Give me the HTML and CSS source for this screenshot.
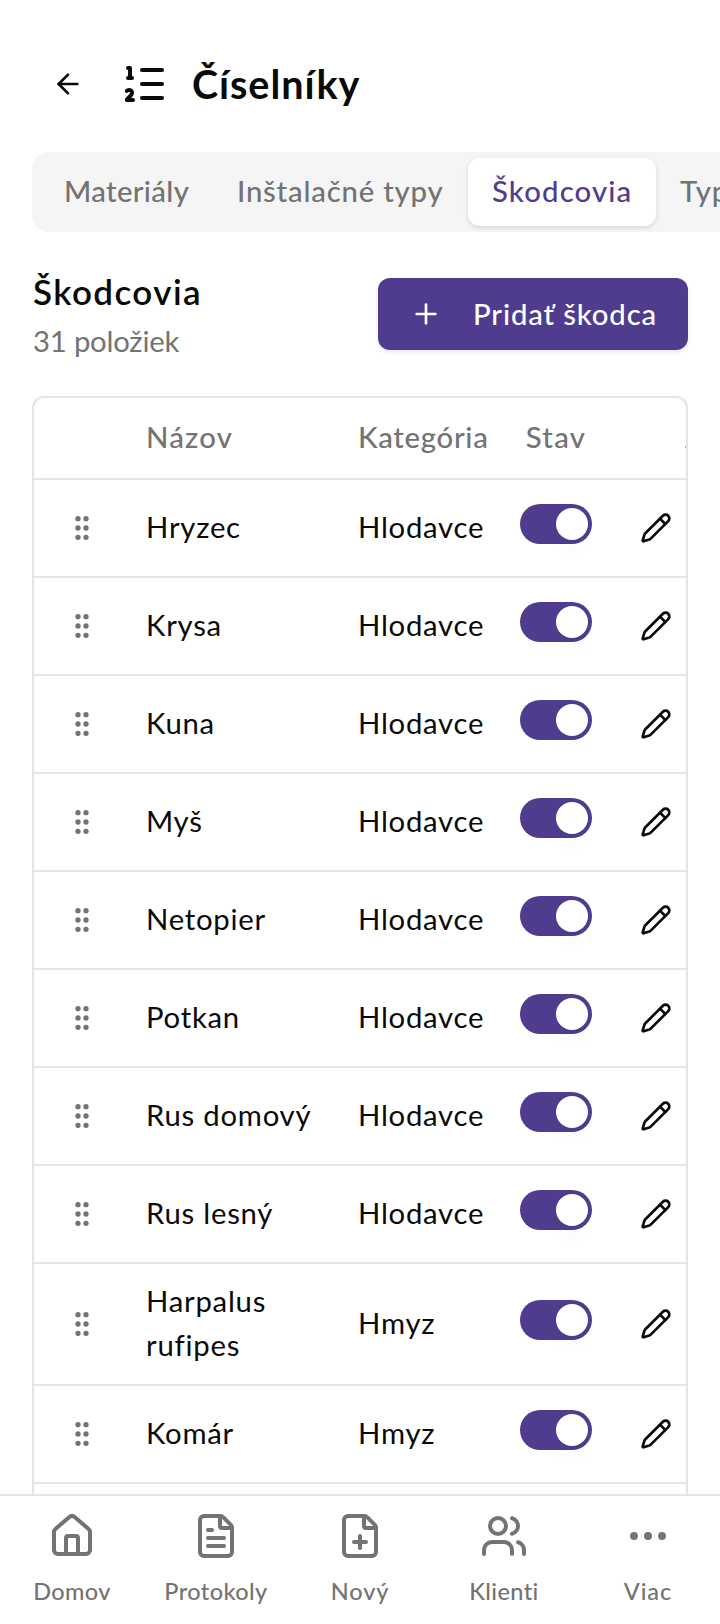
FILE: index.html
```html
<!DOCTYPE html>
<html lang="sk">
<head>
  <meta charset="UTF-8">
  <meta name="viewport" content="width=device-width, initial-scale=1.0">
  <title>Číselníky</title>
  <link rel="stylesheet" href="styles.css">
</head>
<body>
  <svg class="sprite" width="0" height="0">
    <symbol id="grip" viewBox="0 0 24 24">
      <circle cx="9" cy="12" r="1"/><circle cx="9" cy="5" r="1"/><circle cx="9" cy="19" r="1"/>
      <circle cx="15" cy="12" r="1"/><circle cx="15" cy="5" r="1"/><circle cx="15" cy="19" r="1"/>
    </symbol>
    <symbol id="pencil" viewBox="0 0 24 24">
      <path d="M21.174 6.812a1 1 0 0 0-3.986-3.987L3.842 16.174a2 2 0 0 0-.5.83l-1.321 4.352a.5.5 0 0 0 .623.622l4.353-1.32a2 2 0 0 0 .83-.497z"/>
      <path d="m15 5 4 4"/>
    </symbol>
    <symbol id="file" viewBox="0 0 24 24">
      <path d="M6 22a2 2 0 0 1-2-2V4a2 2 0 0 1 2-2h8a2.4 2.4 0 0 1 1.704.706l3.588 3.588A2.4 2.4 0 0 1 20 8v12a2 2 0 0 1-2 2z"/>
      <path d="M14 2v5a1 1 0 0 0 1 1h5"/>
    </symbol>
  </svg>

  <div class="screen">
    <header class="page-header">
      <a href="#" class="back">
        <svg class="icon" viewBox="0 0 24 24"><path d="m12 19-7-7 7-7"/><path d="M19 12H5"/></svg>
      </a>
      <svg class="icon icon-lg" viewBox="0 0 24 24">
        <path d="M11 5h10"/><path d="M11 12h10"/><path d="M11 19h10"/>
        <path d="M4 4h1v5"/><path d="M4 9h2"/>
        <path d="M6.5 20H3.4c0-1 2.6-1.925 2.6-3.5a1.5 1.5 0 0 0-2.6-1.02"/>
      </svg>
      <h1>Číselníky</h1>
    </header>

    <nav class="tabs">
      <a href="#" class="tab tab-materials">Materiály</a>
      <a href="#" class="tab tab-install">Inštalačné typy</a>
      <a href="#" class="tab tab-pests active">Škodcovia</a>
      <a href="#" class="tab">Typy zásahov</a>
    </nav>

    <section class="section-head">
      <div>
        <h2>Škodcovia</h2>
        <p class="count">31 položiek</p>
      </div>
      <button class="add">
        <svg class="icon" viewBox="0 0 24 24"><path d="M5 12h14"/><path d="M12 5v14"/></svg>
        <span>Pridať škodca</span>
      </button>
    </section>

    <div class="table-wrap">
      <table>
        <colgroup>
          <col class="col-grip"><col class="col-name"><col class="col-cat"><col class="col-state"><col class="col-actions">
        </colgroup>
        <thead>
          <tr><th></th><th class="th-name">Názov</th><th class="th-cat">Kategória</th><th class="th-state">Stav</th><th class="th-actions">Akcie</th></tr>
        </thead>
        <tbody id="rows"></tbody>
      </table>
    </div>

    <nav class="bottom-nav">
      <a href="#">
        <svg class="icon icon-lg" viewBox="0 0 24 24">
          <path d="M15 21v-8a1 1 0 0 0-1-1h-4a1 1 0 0 0-1 1v8"/>
          <path d="M3 10a2 2 0 0 1 .709-1.528l7-5.999a2 2 0 0 1 2.582 0l7 5.999A2 2 0 0 1 21 10v9a2 2 0 0 1-2 2H5a2 2 0 0 1-2-2z"/>
        </svg>
        <span>Domov</span>
      </a>
      <a href="#">
        <svg class="icon icon-lg" viewBox="0 0 24 24"><use href="#file"/><path d="M10 9H8"/><path d="M16 13H8"/><path d="M16 17H8"/></svg>
        <span>Protokoly</span>
      </a>
      <a href="#">
        <svg class="icon icon-lg" viewBox="0 0 24 24"><use href="#file"/><path d="M9 15h6"/><path d="M12 18v-6"/></svg>
        <span class="wide">Nový</span>
      </a>
      <a href="#">
        <svg class="icon icon-lg" viewBox="0 0 24 24">
          <path d="M16 21v-2a4 4 0 0 0-4-4H6a4 4 0 0 0-4 4v2"/><path d="M16 3.128a4 4 0 0 1 0 7.744"/>
          <path d="M22 21v-2a4 4 0 0 0-3-3.87"/><circle cx="9" cy="7" r="4"/>
        </svg>
        <span>Klienti</span>
      </a>
      <a href="#">
        <svg class="icon icon-lg" viewBox="0 0 24 24"><circle cx="12" cy="12" r="1"/><circle cx="19" cy="12" r="1"/><circle cx="5" cy="12" r="1"/></svg>
        <span class="wide">Viac</span>
      </a>
    </nav>
  </div>

  <script src="script.js"></script>
</body>
</html>
```
FILE: styles.css
```css
* { box-sizing: border-box; }
body { margin: 0; font-family: Lato, sans-serif; font-size: 29.3px; line-height: 44px; color: #0a0a0a; background: #fff; }
a { color: inherit; text-decoration: none; }
h1, h2, p { margin: 0; }
.sprite { display: block; }

.screen { display: flex; flex-direction: column; height: 1624px; overflow: hidden; }
.icon { width: 32px; height: 32px; flex: none; display: block; fill: none; stroke: currentColor; stroke-width: 2; stroke-linecap: round; stroke-linejoin: round; }
.icon-lg { width: 48px; height: 48px; }

/* header */
.page-header { display: flex; align-items: center; height: 104px; margin-top: 32px; padding-left: 52px; }
.back { margin-right: 36px; }
.page-header h1 { margin-left: 24px; font-size: 39.5px; font-weight: 700; line-height: 56px; letter-spacing: 0.95px; }

/* tabs */
.tabs { display: flex; flex: none; height: 80px; margin: 16px 0 0 32px; padding: 6px; background: #f5f5f5; border-radius: 16px 0 0 16px; overflow: hidden; }
.tab { flex: none; height: 68px; padding: 11px 24px; color: #737373; font-weight: 500; letter-spacing: 0.8px; white-space: nowrap; border-radius: 12px; }
.tab-materials { width: 173px; padding-left: 26px; letter-spacing: 0.35px; }
.tab-install { width: 257px; padding-left: 26px; }
.tab-pests { width: 188px; letter-spacing: 1.15px; }
.tab.active { background: #fff; color: #503c8e; box-shadow: 0 2px 5px rgba(0,0,0,0.12); }

/* section title + button */
.section-head { display: flex; justify-content: space-between; padding: 0 32px; margin-top: 32px; height: 132px; }
.section-head h2 { margin: 1px 0 0 1px; font-size: 35px; line-height: 52px; font-weight: 600; letter-spacing: 1.4px; }
.count { margin-left: 1px; color: #737373; line-height: 48px; letter-spacing: -0.2px; }
.add { display: flex; align-items: center; width: 310px; height: 72px; margin-top: 14px; padding: 0 0 0 32px; border: 0; border-radius: 12px; background: #503c8e; color: #fff; font: inherit; font-weight: 500; letter-spacing: 0.85px; box-shadow: 0 2px 4px rgba(0,0,0,0.1); }
.add span { margin-left: 31px; white-space: nowrap; }

/* table */
.table-wrap { flex: 1; min-height: 0; margin: 0 32px; border: 2px solid #e5e5e5; border-bottom: 0; border-radius: 12px 12px 0 0; overflow: hidden; }
table { width: 774px; table-layout: fixed; border-collapse: separate; border-spacing: 0; letter-spacing: 0.75px; }
.col-grip { width: 96px; }
.col-name { width: 213px; }
.col-cat { width: 161px; }
.col-state { width: 104px; }
.col-actions { width: 200px; }
th, td { padding: 0 16px; text-align: left; border-bottom: 2px solid #e5e5e5; }
th { height: 82px; padding-bottom: 2px; color: #737373; font-weight: 500; }
td { height: 98px; }
.name, .category { padding-bottom: 2px; }
.category { padding-left: 15px; }
.tall td { height: 122px; }
.th-name { letter-spacing: 1.2px; }
.th-cat { padding-left: 15px; letter-spacing: 0.7px; }
.th-state { text-align: center; letter-spacing: 1.3px; }
.th-actions { padding-left: 77px; }
.grip { padding-left: 32px; color: #737373; }
.actions { padding-left: 32px; }
.switch { display: block; width: 72px; height: 40px; margin-top: -8px; padding: 4px; border-radius: 20px; background: #503c8e; }
.switch span { display: block; width: 32px; height: 32px; margin-left: 32px; border-radius: 50%; background: #fff; box-shadow: 0 16px 16px -6px rgba(0,0,0,0.03); }

/* bottom bar */
.bottom-nav { display: grid; grid-template-columns: repeat(5, 1fr); flex: none; height: 130px; padding-top: 16px; border-top: 2px solid #e5e5e5; background: #fff; color: #737373; }
.bottom-nav a { display: flex; flex-direction: column; align-items: center; font-size: 23.5px; font-weight: 500; line-height: 32px; }
.bottom-nav span { margin-top: 15px; letter-spacing: 0.4px; }
.bottom-nav .wide { letter-spacing: 0.9px; }
```
FILE: script.js
```javascript
const pests = [
  ['Hryzec', 'Hlodavce'],
  ['Krysa', 'Hlodavce'],
  ['Kuna', 'Hlodavce'],
  ['Myš', 'Hlodavce'],
  ['Netopier', 'Hlodavce'],
  ['Potkan', 'Hlodavce'],
  ['Rus domový', 'Hlodavce'],
  ['Rus lesný', 'Hlodavce'],
  ['Harpalus<br>rufipes', 'Hmyz', 'tall'],
  ['Komár', 'Hmyz'],
  ['', '']
];

document.getElementById('rows').innerHTML = pests.map(([name, category, cls]) => `
  <tr class="${cls || ''}">
    <td class="grip"><svg class="icon"><use href="#grip"/></svg></td>
    <td class="name">${name}</td>
    <td class="category">${category}</td>
    <td><span class="switch"><span></span></span></td>
    <td class="actions"><svg class="icon"><use href="#pencil"/></svg></td>
  </tr>`).join('');
```
